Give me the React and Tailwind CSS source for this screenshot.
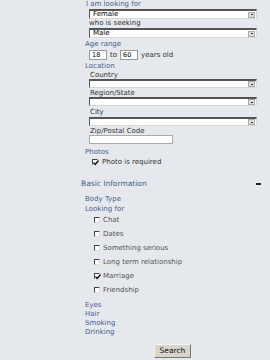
import React from "react";

function Select({ value }) {
  return (
    <div className="ml-[89px] w-[168px] h-[10px] bg-white border-t-2 border-l border-t-[#555] border-l-[#555] border-b border-r border-b-[#d8d8d8] border-r-[#d8d8d8] flex items-center justify-between pr-[1px]">
      <span className="pl-[3px] text-[7px] leading-none text-black">{value}</span>
      <div className="w-[7px] h-[6px] bg-[#dcdcdc] border border-[#aaa] flex items-center justify-center">
        <div className="w-[2px] h-[1px] bg-[#333]" />
      </div>
    </div>
  );
}

function Sel2() {
  return (
    <div className="ml-[89px] w-[168px] h-[9px] bg-white border-t-2 border-l border-t-[#555] border-l-[#555] border-b border-r border-b-[#d8d8d8] border-r-[#d8d8d8] flex items-center justify-end pr-[1px]">
      <div className="w-[7px] h-[6px] bg-[#dcdcdc] border border-[#aaa] flex items-center justify-center">
        <div className="w-[2px] h-[1px] bg-[#333]" />
      </div>
    </div>
  );
}

function Box({ checked }) {
  return (
    <div className="w-[6px] h-[6px] bg-white border-t border-l border-t-[#444] border-l-[#444] border-b border-r border-b-[#ddd] border-r-[#ddd] relative">
      {checked && (
        <svg className="absolute left-0 top-0" width="6" height="6" viewBox="0 0 6 6">
          <path d="M0.5 2.5 L2.2 4.5 L5.5 0.5" stroke="#111" strokeWidth="1.3" fill="none" />
        </svg>
      )}
    </div>
  );
}

function Check({ label, checked }) {
  return (
    <div className="h-[14px] flex items-center pl-[94px] gap-[3px]">
      <Box checked={checked} />
      <span className="text-[#555] text-[7px] leading-none">{label}</span>
    </div>
  );
}

export default function App() {
  const blue = "text-[#46618f]";
  return (
    <div
      className="w-[270px] h-[360px] bg-[#e5e8ec] overflow-hidden text-[7px]"
      style={{ fontFamily: "'DejaVu Sans', Verdana, sans-serif" }}
    >
      <div className={`h-[9px] leading-[9px] pl-[86px] ${blue}`}>I am looking for</div>
      <Select value="Female" />
      <div className="h-[9px] leading-[9px] pl-[89px] text-[#333]">who is seeking</div>
      <Select value="Male" />
      <div className={`mt-[2px] h-[9px] leading-[9px] pl-[85px] ${blue}`}>Age range</div>
      <div className="mt-[1px] h-[10px] flex items-center pl-[89px]">
        <div className="w-[18px] h-[10px] bg-white border border-[#999] flex items-center pl-[2px] text-[6.5px] text-black leading-none">18</div>
        <span className="mx-[3px] text-[#333]">to</span>
        <div className="w-[18px] h-[10px] bg-white border border-[#999] flex items-center pl-[2px] text-[6.5px] text-black leading-none">60</div>
        <span className="ml-[3px] text-[#333]">years old</span>
      </div>
      <div className={`mt-[2px] h-[9px] leading-[9px] pl-[85px] ${blue}`}>Location</div>
      <div className="h-[8px] leading-[8px] pl-[90px] text-[#333]">Country</div>
      <Sel2 />
      <div className="mt-[1px] h-[8px] leading-[8px] pl-[90px] text-[#333]">Region/State</div>
      <Sel2 />
      <div className="mt-[2px] h-[8px] leading-[8px] pl-[90px] text-[#333]">City</div>
      <div className="mt-[1px]">
        <Sel2 />
      </div>
      <div className="mt-[1px] h-[8px] leading-[8px] pl-[90px] text-[#333]">Zip/Postal Code</div>
      <div className="ml-[89px] w-[84px] h-[9px] bg-white border border-[#aaa]" />
      <div className={`mt-[4px] h-[8px] leading-[8px] pl-[85px] ${blue}`}>Photos</div>
      <div className="mt-[2px] h-[8px] flex items-center pl-[92px] gap-[4px]">
        <Box checked />
        <span className="text-[#333] leading-none">Photo is required</span>
      </div>
      <div className="mt-[13px] h-[10px] flex items-center justify-between pl-[81px] pr-[9px]">
        <span className={`text-[7.5px] leading-none ${blue}`}>Basic Information</span>
        <div className="w-[5px] h-[2px] bg-[#222]" />
      </div>
      <div className={`mt-[6px] h-[8px] leading-[8px] pl-[85px] ${blue}`}>Body Type</div>
      <div className={`mt-[2px] h-[8px] leading-[8px] pl-[85px] ${blue}`}>Looking for</div>
      <Check label="Chat" />
      <Check label="Dates" />
      <Check label="Something serious" />
      <Check label="Long term relationship" />
      <Check label="Marriage" checked />
      <Check label="Friendship" />
      <div className={`mt-[4px] pl-[85px] ${blue}`}>
        <div className="h-[9px] leading-[9px]">Eyes</div>
        <div className="h-[9px] leading-[9px]">Hair</div>
        <div className="h-[9px] leading-[9px]">Smoking</div>
        <div className="h-[9px] leading-[9px]">Drinking</div>
      </div>
      <div className="mt-[7px] ml-[154px] w-[37px] h-[14px] bg-[#d8d5cc] border border-t-[#f4f4f4] border-l-[#f4f4f4] border-b-[#777] border-r-[#777] flex items-center justify-center text-[7.5px] text-[#111] leading-none">
        Search
      </div>
    </div>
  );
}
